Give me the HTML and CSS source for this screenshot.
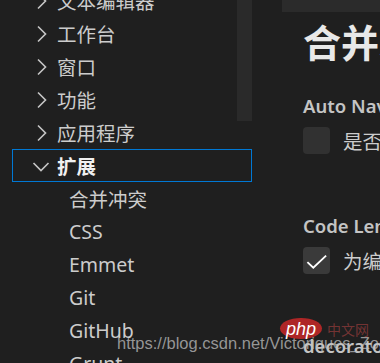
FILE: index.html
```html
<!DOCTYPE html>
<html lang="zh-CN">
<head>
  <meta charset="UTF-8">
  <title>设置 - 合并冲突</title>
  <link rel="stylesheet" href="styles.css">
</head>
<body>
  <div class="settings">
    <!-- table of contents -->
    <nav class="toc">
      <div class="toc-list">
        <div class="toc-row"><svg class="chev" viewBox="0 0 16 16"><path d="M6 3l5 5-5 5"/></svg><span>文本编辑器</span></div>
        <div class="toc-row"><svg class="chev" viewBox="0 0 16 16"><path d="M6 3l5 5-5 5"/></svg><span>工作台</span></div>
        <div class="toc-row"><svg class="chev" viewBox="0 0 16 16"><path d="M6 3l5 5-5 5"/></svg><span>窗口</span></div>
        <div class="toc-row"><svg class="chev" viewBox="0 0 16 16"><path d="M6 3l5 5-5 5"/></svg><span>功能</span></div>
        <div class="toc-row"><svg class="chev" viewBox="0 0 16 16"><path d="M6 3l5 5-5 5"/></svg><span>应用程序</span></div>
        <div class="toc-row selected"><svg class="chev" viewBox="0 0 16 16"><path d="M3 6l5 5 5-5"/></svg><span>扩展</span></div>
        <div class="toc-row child"><span>合并冲突</span></div>
        <div class="toc-row child"><span>CSS</span></div>
        <div class="toc-row child"><span>Emmet</span></div>
        <div class="toc-row child"><span>Git</span></div>
        <div class="toc-row child"><span>GitHub</span></div>
        <div class="toc-row child"><span>Grunt</span></div>
      </div>
      <div class="scrollbar"></div>
    </nav>

    <!-- settings list -->
    <main class="main">
      <div class="header-bar"></div>
      <div class="content">
        <h1 class="group-title">合并冲突</h1>

        <div class="setting">
          <div class="setting-title">Auto Navigate Next</div>
          <label class="setting-value">
            <span class="checkbox"></span>
            <span class="desc">是否在解决合并冲突后自动转到下一个合并冲突。</span>
          </label>
        </div>

        <div class="setting">
          <div class="setting-title">Code Lens: Enabled</div>
          <label class="setting-value">
            <span class="checkbox checked"><svg viewBox="0 0 16 16"><path d="M2.6 9l3.5 3.3 7.6-7.2"/></svg></span>
            <span class="desc">为编辑器中的合并冲突区域启用或禁用 CodeLens。</span>
          </label>
        </div>

        <div class="setting">
          <div class="setting-title">decorators: Enabled</div>
          <label class="setting-value">
            <span class="checkbox checked"><svg viewBox="0 0 16 16"><path d="M2.6 9l3.5 3.3 7.6-7.2"/></svg></span>
            <span class="desc">为编辑器中的合并冲突区域启用或禁用装饰器。</span>
          </label>
        </div>
      </div>
    </main>
  </div>

  <!-- watermarks -->
  <div class="wm-url">https://blog.csdn.net/Victoriques_Zoe</div>
  <div class="wm-php">
    <span class="php-badge">php</span>
    <span class="php-cn">中文网</span>
  </div>
</body>
</html>
```

FILE: styles.css
```css
/* General */
body {
    margin: 0;
    height: 363px;
    overflow: hidden;
    background: #1f1f1f;
    color: #cccccc;
    font-family: "Noto Sans", "Noto Sans CJK SC", sans-serif;
}

.settings {
    display: flex;
    height: 363px;
}

/* TOC */
.toc {
    position: relative;
    width: 252px;
    flex-shrink: 0;
    overflow: hidden;
}

.toc-list {
    margin-top: -16px;
}

.toc-row {
    box-sizing: border-box;
    display: flex;
    align-items: center;
    gap: 4px;
    height: 33px;
    width: 240px;
    margin-left: 12px;
    padding-left: 16px;
    border: 1px solid transparent;
    font-size: 19.5px;
    white-space: nowrap;
}

.toc-row.child {
    padding-left: 56px;
}

.toc-row.selected {
    border-color: #0078d4;
    color: #f0f0f0;
    font-weight: 700;
}

.chev {
    width: 24px;
    height: 24px;
    flex-shrink: 0;
    fill: none;
    stroke: #c5c5c5;
    stroke-width: 1.1;
}

.scrollbar {
    position: absolute;
    left: 237px;
    top: 0;
    width: 15px;
    height: 121px;
    background: #2a2a2a;
}

/* Main */
.main {
    flex: 1;
    min-width: 0;
    padding-left: 30px;
    overflow: hidden;
}

.header-bar {
    height: 12px;
    background: #2b2b2b;
}

.content {
    padding-left: 21px;
    white-space: nowrap;
}

.group-title {
    margin: 11px 0 0;
    font-size: 38px;
    line-height: 38px;
    font-weight: 700;
    color: #e8e8e8;
}

.setting {
    margin-top: 35px;
}

.setting + .setting {
    margin-top: 61px;
}

.setting-title {
    font-size: 18.5px;
    line-height: 20px;
    font-weight: 600;
    color: #c4c4c4;
}

.setting-value {
    display: flex;
    align-items: center;
    gap: 13px;
    margin-top: 10px;
}

.checkbox {
    display: flex;
    align-items: center;
    justify-content: center;
    width: 27px;
    height: 27px;
    flex-shrink: 0;
    border-radius: 4px;
    background: #313131;
}

.checkbox.checked {
    background: #3a3a3a;
}

.checkbox svg {
    width: 27px;
    height: 27px;
    fill: none;
    stroke: #ffffff;
    stroke-width: 1.1;
}

.desc {
    font-size: 19.5px;
    color: #cccccc;
}

/* Watermarks */
.wm-url {
    position: absolute;
    left: 117px;
    top: 334px;
    font-family: "Liberation Sans", Arial, sans-serif;
    font-size: 16.5px;
    color: rgba(190, 190, 190, 0.75);
    white-space: nowrap;
}

.wm-php {
    position: absolute;
    left: 280px;
    top: 318px;
    display: flex;
    align-items: center;
    gap: 5px;
}

.php-badge {
    display: flex;
    align-items: center;
    justify-content: center;
    width: 42px;
    height: 21px;
    border-radius: 50%;
    background: rgba(200, 40, 40, 0.85);
    color: #ffffff;
    font-family: "Liberation Sans", Arial, sans-serif;
    font-style: italic;
    font-size: 18px;
    line-height: 1;
}

.php-cn {
    font-size: 14px;
    color: rgba(190, 70, 70, 0.55);
}
```
